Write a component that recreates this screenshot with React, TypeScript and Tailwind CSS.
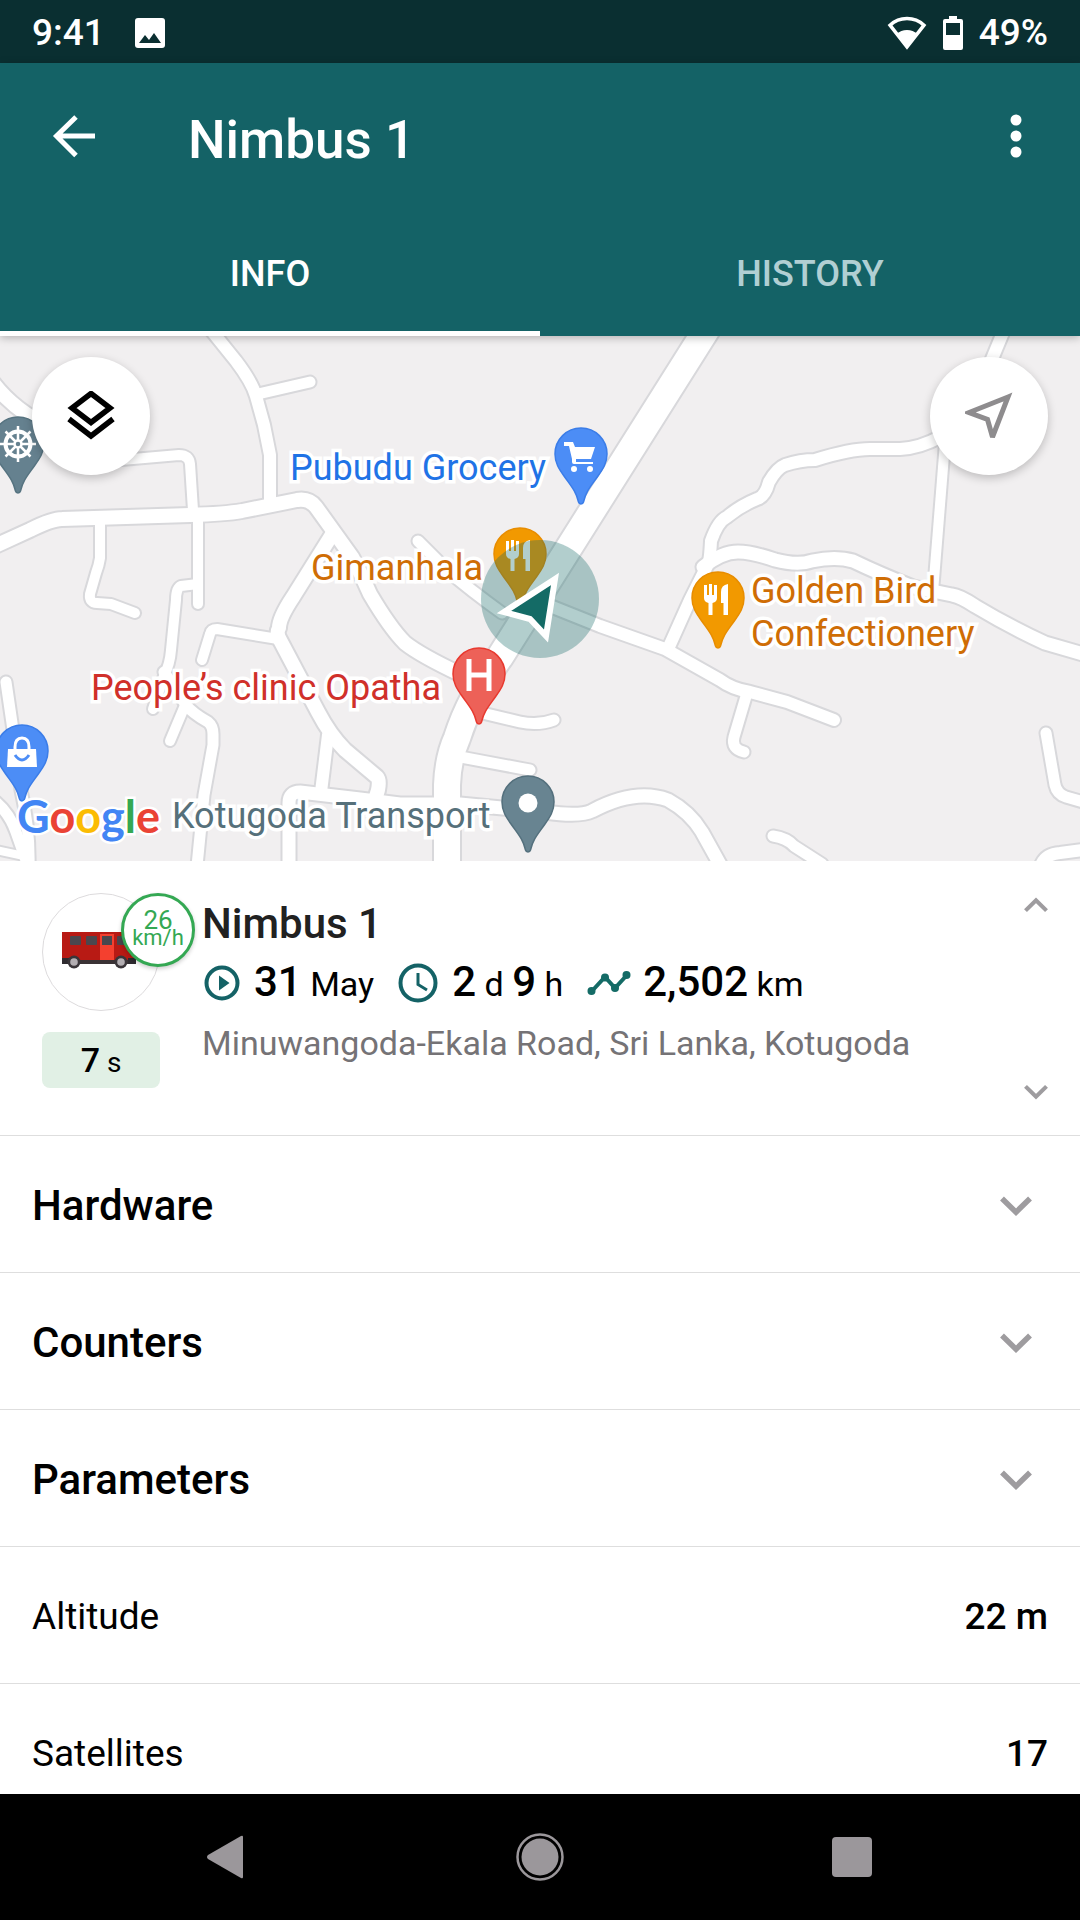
import type { ReactNode } from "react";

const ROADS: { d: string; w: number }[] = [
  { d: "M211 330L236 361Q252 382 256 396L264 425L270 455V506", w: 12 },
  { d: "M258 394L310 382", w: 11 },
  { d: "M-5 546L30 530Q52 519 62 519L190 515Q225 514 242 511L297 500Q309 498 316 507L352 557Q362 575 370 594Q390 628 405 643Q420 655 460 674", w: 14 },
  { d: "M-6 384Q14 410 50 428", w: 14 },
  { d: "M110 461L179 455Q189 455 190 464L193 510", w: 10 },
  { d: "M198 515V604", w: 10 },
  { d: "M198 584L181 586Q176 588 176 600L171 650Q170 664 164 676L153 709", w: 10 },
  { d: "M100 524V558Q99 565 96 573L90 594Q89 603 97 603L111 604L135 613", w: 10 },
  { d: "M333 533L293 597Q279 618 279 628Q276 633 280 640L318 712Q330 735 345 750L377 777Q380 780 378 790L374 803", w: 14 },
  { d: "M278 639L217 629Q211 629 210 634L202 660", w: 10 },
  { d: "M164 672L186 705Q192 713 208 722Q213 726 213 734V745L204 795L197 866", w: 11 },
  { d: "M186 703L170 741", w: 10 },
  { d: "M6 682L13 730L21 790Q30 830 29 866", w: 11 },
  { d: "M-4 802Q10 814 16 832L28 866", w: 11 },
  { d: "M-4 850L24 856", w: 8 },
  { d: "M328 735L321 792", w: 12 },
  { d: "M289 866V803Q289 792 300 792L360 799L400 804H460L545 812Q580 817 592 811Q635 788 668 800Q690 812 702 832L722 868", w: 13 },
  { d: "M418 541L447 570Q470 590 502 613", w: 11 },
  { d: "M535 600L600 626L665 649L720 680Q732 689 750 692L787 702L834 720", w: 12 },
  { d: "M668 649L690 600L707 566Q710 562 711 541Q718 521 727 517Q740 506 757 499Q765 497 769 482Q777 468 785 465Q800 460 815 460Q850 449 870 449H900Q920 448 940 437", w: 12 },
  { d: "M703 567Q722 552 738 552Q752 552 775 560Q798 566 812 561Q836 556 853 561Q880 574 913 587L952 595Q960 596 975 606Q1010 627 1045 643L1090 656", w: 13 },
  { d: "M946 430L933 592", w: 10 },
  { d: "M1009 318L985 376", w: 12 },
  { d: "M478 712L520 722Q538 726 554 720", w: 11 },
  { d: "M455 756L530 770", w: 11 },
  { d: "M747 693L734 737Q731 749 744 752", w: 11 },
  { d: "M1046 733L1055 785Q1057 794 1066 797L1090 804", w: 11 },
  { d: "M773 836Q787 838 794 846L822 864", w: 11 },
  { d: "M1040 868Q1044 854 1060 853L1090 849", w: 12 },
  { d: "M710 324L500 657Q470 697 457 738Q448 758 447 785V870", w: 26 },
];

const label =
  "absolute whitespace-nowrap text-[36px] leading-[43px] [paint-order:stroke_fill] [-webkit-text-stroke:7px_white] [stroke-linejoin:round]";

function RoadMap() {
  return (
    <svg viewBox="0 336 1080 525" width="1080" height="525" fill="none" strokeLinecap="round" strokeLinejoin="round" aria-hidden="true">
      {ROADS.map((r) => (
        <path key={r.d} d={r.d} stroke="#d8d8db" strokeWidth={r.w + 4} />
      ))}
      {ROADS.map((r) => (
        <path key={r.d} d={r.d} stroke="#ffffff" strokeWidth={r.w} />
      ))}
    </svg>
  );
}

function Pin({ place, fill, edge, children }: { place: string; fill: string; edge: string; children: ReactNode }) {
  return (
    <svg viewBox="0 0 54 78" className={`absolute h-[78px] w-[54px] ${place}`} aria-hidden="true">
      <path
        d="M27 1C12.600 1 1 12.600 1 27c0 9 4 15 9 22 7 10 12 15 14.500 26 .6 2.500 4.400 2.500 5 0C32 64 37 59 44 49c5-7 9-13 9-22C53 12.600 41.400 1 27 1z"
        fill={fill}
        stroke={edge}
        strokeWidth="1.500"
      />
      {children}
    </svg>
  );
}

function Cutlery() {
  return (
    <g fill="#fff">
      <path d="M13 14h3v10h2V13h3v11h2V14h3v13q0 4-4.500 5v12h-4V32Q13 31 13 27z" />
      <path d="M37 13v31h-4.500V32H30V21q0-7 7-8z" />
    </g>
  );
}

function Chevron({ className, up = false }: { className: string; up?: boolean }) {
  return (
    <svg viewBox="0 0 32 20" className={className} fill="none" stroke="#9e9c9f" strokeWidth="5.500" aria-hidden="true">
      <path d={up ? "M2 17.500L16 3.800L30 17.500" : "M2 2.500L16 16.200L30 2.500"} />
    </svg>
  );
}

function StatusBar() {
  return (
    <div className="flex h-[63px] shrink-0 items-center justify-between bg-[#0a2f31] px-8 pt-[2px] text-[37px] leading-[42px] font-medium text-white">
      <div className="flex items-center gap-[30px]">
        <span>9:41</span>
        <svg viewBox="0 0 30 30" className="size-[30px]" aria-hidden="true">
          <rect width="30" height="30" rx="3" fill="#fff" />
          <path d="M4 25l6-8 4 5 5-7 7 10z" fill="#0a2f31" />
        </svg>
      </div>
      <div className="flex items-center">
        <svg viewBox="0 0 40 34" className="h-[34px] w-10" aria-hidden="true">
          <path d="M20 2.500C13.500 2.500 7.500 5 3 9.200L20 31L37 9.200C32.500 5 26.500 2.500 20 2.500z" fill="none" stroke="#fff" strokeWidth="3.500" />
          <path d="M20 14c-4 0-7.600 1.500-10 4l10 14 10-14c-2.400-2.500-6-4-10-4z" fill="#fff" />
        </svg>
        <svg viewBox="0 0 20 34" className="ml-4 h-[34px] w-5" aria-hidden="true">
          <path fillRule="evenodd" d="M6 0h8v3h4q2 0 2 2v27q0 2-2 2H2q-2 0-2-2V5q0-2 2-2h4zM3 7v12h14V7z" fill="#fff" />
        </svg>
        <span className="ml-4">49%</span>
      </div>
    </div>
  );
}

function Header() {
  return (
    <header className="relative z-10 shrink-0 bg-[#146266] text-white shadow-[0_2px_8px_rgba(0,0,0,0.25)]">
      <div className="flex h-[149px] items-center pr-10 pl-[50px]">
        <button type="button" aria-label="Back" className="flex size-12 items-center justify-center">
          <svg viewBox="0 0 48 48" className="size-12" fill="none" stroke="#fff" strokeWidth="5" aria-hidden="true">
            <path d="M45 22H7M26 3L6.500 22L26 41.500" />
          </svg>
        </button>
        <h1 className="ml-[90px] flex-1 pt-1 text-[53px] leading-[60px] font-medium">Nimbus 1</h1>
        <button type="button" aria-label="More options" className="flex size-12 items-center justify-center">
          <svg viewBox="0 0 48 48" className="size-12" fill="#fff" aria-hidden="true">
            <circle cx="24" cy="6" r="5.500" />
            <circle cx="24" cy="22" r="5.500" />
            <circle cx="24" cy="38" r="5.500" />
          </svg>
        </button>
      </div>
      <div role="tablist" className="grid h-[124px] grid-cols-2 text-[36px] leading-[42px] font-medium">
        <button type="button" role="tab" aria-selected="true" className="border-b-[5px] border-white pt-1">INFO</button>
        <button type="button" role="tab" aria-selected="false" className="border-b-[5px] border-transparent pt-1 text-[#b1cfd3]">HISTORY</button>
      </div>
    </header>
  );
}

const fab = "absolute top-[21px] flex size-[118px] items-center justify-center rounded-full bg-white shadow-[0_3px_10px_rgba(0,0,0,0.22)]";

function MapPanel() {
  return (
    <section aria-label="Map" className="relative h-[525px] shrink-0 overflow-hidden bg-[#f1eff0]">
      <div className="absolute inset-y-0 left-1/2 w-[1080px] -translate-x-1/2">
        <RoadMap />

        <Pin place="-left-[9px] top-[80px]" fill="#65818f" edge="#567380">
          <g fill="none" stroke="#fff">
            <circle cx="27" cy="28" r="12.500" strokeWidth="4" />
            <circle cx="27" cy="28" r="3.500" strokeWidth="2.500" />
            <path strokeWidth="2.500" d="M27 10v15M27 31v15M9 28h15M30 28h15M14.500 15.500l10 10M29.500 30.500l10 10M39.500 15.500l-10 10M24.500 30.500l-10 10" />
          </g>
        </Pin>
        <Pin place="left-[554px] top-[91px]" fill="#4c8df6" edge="#3b7de8">
          <g fill="#fff">
            <path d="M10 15h9l2 5h20l-4 12H22v3h17v2H20q-2 0-2-2v-3l-3-13h-5z" />
            <circle cx="20" cy="42" r="3" />
            <circle cx="36" cy="42" r="3" />
          </g>
        </Pin>
        <Pin place="left-[493px] top-[191px]" fill="#f29900" edge="#e88d00">
          <Cutlery />
        </Pin>
        <Pin place="left-[691px] top-[235px]" fill="#f29900" edge="#e88d00">
          <Cutlery />
        </Pin>
        <Pin place="left-[452px] top-[311px]" fill="#ed6158" edge="#e8392f">
          <path d="M17 12v32M37 12v32M17 28h20" stroke="#fff" strokeWidth="5" />
        </Pin>
        <Pin place="left-[501px] top-[439px]" fill="#688491" edge="#54707d">
          <circle cx="27" cy="28" r="9.500" fill="#fff" />
        </Pin>
        <Pin place="-left-[5px] top-[388px]" fill="#4c8df6" edge="#3b7de8">
          <path d="M13 25h28l1 18H12z" fill="#fff" />
          <path d="M20 28v-5q0-9 7-9t7 9v5" fill="none" stroke="#fff" strokeWidth="3" />
          <path d="M20 31q7 10 14 0" fill="none" stroke="#4c8df6" strokeWidth="3" />
        </Pin>

        <span className={`${label} left-[290px] top-[111px] text-[#1f73e6]`}>Pubudu Grocery</span>
        <span className={`${label} left-[311px] top-[211px] text-[#cf6d05]`}>Gimanhala</span>
        <span className={`${label} left-[751px] top-[234px] text-[#cf6d05]`}>
          Golden Bird
          <br />
          Confectionery
        </span>
        <span className={`${label} left-[91px] top-[331px] text-[#d0302a]`}>People’s clinic Opatha</span>
        <span className={`${label} left-[172px] top-[459px] text-[#56707a]`}>Kotugoda Transport</span>

        <svg viewBox="0 0 118 118" className="absolute top-[204px] left-[481px] size-[118px]" aria-label="Vehicle position" role="img">
          <circle cx="59" cy="59" r="59" fill="#146b66" fillOpacity="0.33" />
          <path d="M74 39L23 72L49 79L65 96L74 39z" fill="#146b66" stroke="#fff" strokeWidth="6" strokeLinejoin="miter" strokeMiterlimit="3" />
        </svg>
      </div>

      <span
        aria-label="Google"
        className="absolute top-[452px] left-[17px] font-['Lato'] text-[45px] leading-[56px] font-bold [paint-order:stroke_fill] [-webkit-text-stroke:5px_white]"
      >
        <span className="text-[#4285f4]">G</span>
        <span className="text-[#ea4335]">o</span>
        <span className="text-[#fbbc04]">o</span>
        <span className="text-[#4285f4]">g</span>
        <span className="text-[#34a853]">l</span>
        <span className="text-[#ea4335]">e</span>
      </span>

      <button type="button" aria-label="Map layers" className={`${fab} left-8`}>
        <svg viewBox="0 0 48 50" className="h-[50px] w-12" fill="none" stroke="#000" strokeWidth="5.500" aria-hidden="true">
          <path d="M24 2.500L43 17L24 31.500L5 17zM2 28L24 45L46 28" />
        </svg>
      </button>
      <button type="button" aria-label="Center on unit" className={`${fab} right-8`}>
        <svg viewBox="0 0 48 50" className="h-[50px] w-12" fill="none" stroke="#8e8c8e" strokeWidth="5" strokeMiterlimit="3" aria-hidden="true">
          <path d="M43 6L4 21.500L22.500 28.500L27.500 46z" />
        </svg>
      </button>
    </section>
  );
}

function Bus() {
  return (
    <svg viewBox="0 0 76 38" className="h-[38px] w-[76px]" aria-hidden="true">
      <rect x="1" y="1" width="74" height="31" fill="#b81a14" />
      <rect x="1" y="29" width="74" height="4" fill="#3a3235" />
      <rect x="1" y="27" width="7" height="6" fill="#2f2b30" />
      <rect x="67" y="27" width="8" height="6" fill="#2f2b30" />
      <rect x="9" y="5" width="11" height="9" rx="1" fill="#4a474e" />
      <rect x="25" y="5" width="11" height="9" rx="1" fill="#4a474e" />
      <rect x="39" y="3" width="14" height="26" fill="#f4402f" />
      <rect x="41" y="5" width="10" height="9" fill="#4a474e" />
      <rect x="56" y="5" width="10" height="9" rx="1" fill="#4a474e" />
      <circle cx="13" cy="31" r="6.500" fill="#3a3539" />
      <circle cx="13" cy="31" r="3.800" fill="#b3aeb2" />
      <circle cx="60" cy="31" r="6.500" fill="#3a3539" />
      <circle cx="60" cy="31" r="3.800" fill="#b3aeb2" />
    </svg>
  );
}

function UnitCard() {
  return (
    <section className="flex h-[275px] shrink-0 border-b border-[#dedede] pt-8 pr-8 pl-[42px]">
      <div className="relative w-40 shrink-0">
        <div className="flex size-[118px] items-center justify-center rounded-full border border-[#dddbdd] pr-1 pb-1">
          <Bus />
        </div>
        <div className="absolute top-0 left-[79px] flex size-[74px] flex-col items-center justify-center rounded-full border-[3px] border-[#34a853] bg-white pb-1 text-[22px] leading-[17px] text-[#34a853] shadow-[0_2px_4px_rgba(0,0,0,0.2)]">
          <span className="text-[26px] leading-[18px]">26</span>
          <span>km/h</span>
        </div>
        <div className="mt-[21px] flex h-14 w-[118px] items-center justify-center rounded-lg bg-[#e1f0e5] pt-[2px] text-[28px] leading-[42px]">
          <p>
            <b className="text-[34px] font-medium">7</b> s
          </p>
        </div>
      </div>
      <div className="flex flex-1 flex-col">
        <h2 className="mt-2 text-[42px] leading-[46px] font-medium text-[#212121]">Nimbus 1</h2>
        <div className="mt-2 flex items-center text-[34px] leading-[54px] text-black">
          <svg viewBox="0 0 36 36" className="ml-[2px] size-9" aria-hidden="true">
            <circle cx="18" cy="18" r="15.500" fill="none" stroke="#146266" strokeWidth="4" />
            <path d="M15 10.500L25.500 18L15 25.500z" fill="#146266" />
          </svg>
          <p className="ml-[14px]">
            <b className="text-[42px] font-medium">31</b> May
          </p>
          <svg viewBox="0 0 40 40" className="ml-6 size-10" fill="none" stroke="#146266" strokeWidth="4" aria-hidden="true">
            <circle cx="20" cy="20" r="17.500" />
            <path d="M20 10v11.500L29 27" strokeWidth="3" />
          </svg>
          <p className="ml-[14px]">
            <b className="text-[42px] font-medium">2</b> d <b className="text-[42px] font-medium">9</b> h
          </p>
          <svg viewBox="0 0 44 26" className="ml-6 h-[26px] w-11" aria-hidden="true">
            <path d="M5 21L18 7L28 18L40 5" fill="none" stroke="#146b66" strokeWidth="4" />
            <g fill="#146b66">
              <circle cx="4.500" cy="21" r="4" />
              <circle cx="18" cy="7.500" r="4" />
              <circle cx="28" cy="18" r="4" />
              <circle cx="39.500" cy="5" r="4" />
            </g>
          </svg>
          <p className="ml-3">
            <b className="text-[42px] font-medium">2,502</b> km
          </p>
        </div>
        <p className="mt-3 text-[34px] leading-10 text-[#757376]">Minuwangoda-Ekala Road, Sri Lanka, Kotugoda</p>
      </div>
      <div className="flex h-[207px] flex-col justify-between pt-1">
        <button type="button" aria-label="Previous unit" className="flex h-4">
          <Chevron up className="h-4 w-6" />
        </button>
        <button type="button" aria-label="Next unit" className="flex h-4">
          <Chevron className="h-4 w-6" />
        </button>
      </div>
    </section>
  );
}

const row = "flex h-[137px] w-full shrink-0 items-center justify-between border-b border-[#dedede] pt-1 pl-8 text-left";

export default function App() {
  return (
    <div className="flex h-screen flex-col overflow-hidden bg-white font-['Roboto',sans-serif] text-black">
      <StatusBar />
      <Header />
      <main className="flex min-h-0 flex-1 flex-col overflow-y-auto [scrollbar-width:none]">
        <MapPanel />
        <UnitCard />
        {["Hardware", "Counters", "Parameters"].map((name) => (
          <button key={name} type="button" aria-expanded="false" className={`${row} pr-12 text-[42px] leading-[48px] font-medium`}>
            {name}
            <Chevron className="h-5 w-8" />
          </button>
        ))}
        <dl>
          {[
            ["Altitude", "22 m"],
            ["Satellites", "17"],
          ].map(([name, value]) => (
            <div key={name} className={`${row} pr-8 text-[37px] leading-[42px]`}>
              <dt>{name}</dt>
              <dd className="font-medium">{value}</dd>
            </div>
          ))}
        </dl>
      </main>
      <nav aria-label="System" className="grid h-[126px] shrink-0 grid-cols-3 bg-black px-[72px]">
        <button type="button" aria-label="Back" className="flex items-center justify-center">
          <svg viewBox="0 0 48 48" className="size-12" fill="#9b979b" aria-hidden="true">
            <path d="M37 3q2-1 2 1v40q0 2-2 1L4 26q-2-2 0-4z" />
          </svg>
        </button>
        <button type="button" aria-label="Home" className="flex items-center justify-center">
          <svg viewBox="0 0 48 48" className="size-12" aria-hidden="true">
            <circle cx="24" cy="24" r="22.500" fill="none" stroke="#9b979b" strokeWidth="2.500" />
            <circle cx="24" cy="24" r="18.500" fill="#9b979b" />
          </svg>
        </button>
        <button type="button" aria-label="Recent apps" className="flex items-center justify-center">
          <span className="size-10 rounded-[4px] bg-[#9b979b]" />
        </button>
      </nav>
    </div>
  );
}
